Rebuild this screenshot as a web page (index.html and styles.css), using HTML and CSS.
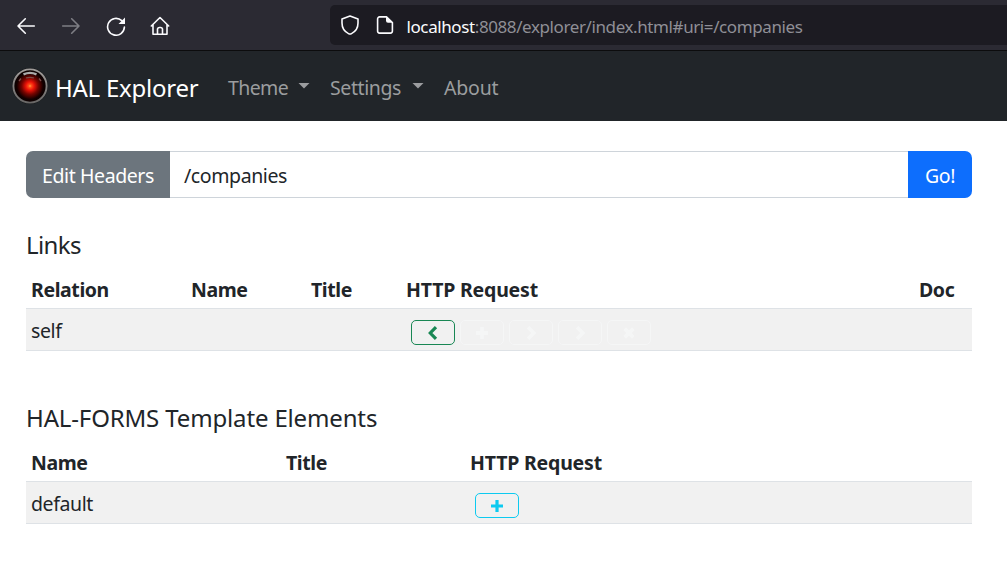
FILE: index.html
```
<!DOCTYPE html>
<html lang="en">
<head>
<meta charset="utf-8">
<title>HAL Explorer</title>
<link rel="stylesheet" href="styles.css">
</head>
<body>
<div class="toolbar">
  <div class="tools">
    <svg class="tool" viewBox="0 0 20 20"><path d="M18.3 10H2M9.300 2.800L2 10l7.300 7.200"/></svg>
    <svg class="tool disabled" viewBox="0 0 20 20"><path d="M1.700 10H18M10.700 2.800L18 10l-7.300 7.200"/></svg>
    <svg class="tool" viewBox="0 0 20 20"><path d="M15.800 4.700A8.400 8.400 0 1 0 18.400 11"/><path class="solid" d="M19 1.500v6.500h-6.500z"/></svg>
    <svg class="tool" viewBox="0 0 20 20"><path d="M1.300 10L10 1.500l8.700 8.500M3 8.800v9.400h14V8.800M7.500 18v-5a2 2 0 0 1 2-1.500h1a2 2 0 0 1 2 1.500v5"/></svg>
  </div>
  <div class="address">
    <svg class="tool" viewBox="0 0 20 20"><path d="M10 1l8 3.100v4c0 4.500-2.300 8.500-6.500 10.500q-1.500.8-3 0C4.300 16.600 2 12.600 2 8.100v-4z"/></svg>
    <svg class="tool page" viewBox="0 0 20 20"><path d="M11.500 1.900H4.600a2 2 0 0 0-2 2v12.200a2 2 0 0 0 2 2h10.800a2 2 0 0 0 2-2V7.500z"/><path class="solid" d="M11 1.500l7 6.300h-5a2 2 0 0 1-2-2z"/></svg>
    <span class="url"><span class="host">localhost</span><span class="path">:8088/explorer/index.html#uri=/companies</span></span>
  </div>
</div>
<nav class="navbar">
  <svg class="logo" viewBox="0 0 38 38">
    <defs>
      <radialGradient id="eye"><stop offset="0" stop-color="#ffa040"/><stop offset=".1" stop-color="#ff4a18"/><stop offset=".26" stop-color="#e81208"/><stop offset=".5" stop-color="#780400"/><stop offset=".8" stop-color="#120000"/><stop offset="1" stop-color="#080000"/></radialGradient>
      <linearGradient id="rim" x2="0" y2="1"><stop offset="0" stop-color="#a09c9a"/><stop offset="1" stop-color="#696766"/></linearGradient>
    </defs>
    <circle cx="19" cy="19" r="18" fill="#15181a"/>
    <circle cx="19" cy="19" r="16.600" fill="url(#eye)" stroke="url(#rim)" stroke-width="1.900"/>
    <path d="M12.500 7.300q6.500-2.800 13 0" fill="none" stroke="#aaa" stroke-width="2.400"/>
    <path d="M15 11q4-1.400 8 0M8 14l2-2.500M30 14l-2-2.500" fill="none" stroke="#7a4a46" stroke-width="1.300"/>
  </svg>
  <span class="brand">HAL Explorer</span>
  <span class="nav-link theme">Theme</span><i class="caret"></i>
  <span class="nav-link settings">Settings</span><i class="caret"></i>
  <span class="nav-link about">About</span>
</nav>
<main class="content">
  <div class="input-group">
    <button class="btn headers">Edit Headers</button>
    <div class="field"><span>/companies</span></div>
    <button class="btn go">Go!</button>
  </div>
  <h5 class="title">Links</h5>
  <div class="table links">
    <div class="row head"><b class="relation">Relation</b><b>Name</b><b>Title</b><b class="request">HTTP Request</b><b>Doc</b></div>
    <div class="row body">
      <span class="self">self</span><span></span><span></span>
      <span class="actions">
        <button class="action get"><svg viewBox="0 0 16 16"><path d="M11 2.200L5.300 8l5.700 5.800"/></svg></button>
        <button class="action off"><svg viewBox="0 0 16 16"><path d="M8 2v12M2 8h12"/></svg></button>
        <button class="action off"><svg viewBox="0 0 16 16"><path d="M5 2.200L10.700 8 5 13.800"/></svg></button>
        <button class="action off"><svg viewBox="0 0 16 16"><path d="M5 2.200L10.700 8 5 13.800"/></svg></button>
        <button class="action off"><svg viewBox="0 0 16 16"><path d="M3.700 3.700l8.600 8.600M12.300 3.700l-8.600 8.600"/></svg></button>
      </span>
      <span></span>
    </div>
  </div>
  <h5 class="title forms-title"><span>HAL-FORMS Template Elements</span></h5>
  <div class="table forms">
    <div class="row head"><b>Name</b><b>Title</b><b class="request">HTTP Request</b></div>
    <div class="row body">
      <span>default</span><span></span>
      <span class="actions"><button class="action post"><svg viewBox="0 0 16 16"><path d="M8 2v12M2 8h12"/></svg></button></span>
    </div>
  </div>
</main>
</body>
</html>
```
FILE: styles.css
```
* { box-sizing: border-box; }
body { margin: 0; background: #fff; color: #212529; font: 19.5px/30px "Noto Sans", "Open Sans", sans-serif; letter-spacing: -.4px; }
button { font: inherit; letter-spacing: inherit; padding: 0; margin: 0; }

.toolbar { display: flex; height: 51px; padding: 5px 0 5px 16px; background: #2b2a33; border-bottom: 1px solid #0c0c0d; }
.tools { display: flex; gap: 24.800px; width: 314px; padding-top: 11px; }
.tool { width: 20px; height: 20px; flex: none; fill: none; stroke: #fbfbfe; stroke-width: 1.600; stroke-linecap: round; stroke-linejoin: round; }
.tool .solid { fill: #fbfbfe; stroke: none; }
.disabled { opacity: .4; }
.address { display: flex; flex: 1; height: 40px; padding: 10px 0 0 10px; background: #1c1b22; border-radius: 5px 0 0 5px; }
.page { margin-left: 15px; }
.url { margin: -3px 0 0 11.500px; font-size: 17px; letter-spacing: -.4px; white-space: nowrap; }
.host { color: #fbfbfe; }
.path { color: #8f8f96; }

.navbar { display: flex; align-items: center; height: 70px; padding: 4px 11px 0; background: #212529; color: #9b9d9f; }
.logo { width: 38px; height: 38px; margin-top: -5px; }
.brand { width: 173px; padding-left: 6px; color: #fff; font-size: 24px; letter-spacing: -.25px; white-space: nowrap; }
.theme { margin-left: 6px; width: 70px; letter-spacing: -.6px; }
.settings { margin-left: 20px; width: 82px; }
.about { margin-left: 20px; letter-spacing: -.2px; }
.caret { width: 12px; height: 6px; margin-top: -5px; background: #9b9d9f; clip-path: polygon(0 0, 100% 0, 50% 100%); }

.content { padding: 30px 35px 0 26px; }
.input-group { display: flex; height: 47px; }
.btn { display: grid; place-items: center; padding-top: 2px; border: 0; color: #fff; }
.headers { width: 144px; background: #6c757d; border-radius: 7px 0 0 7px; }
.go { width: 64px; background: #0d6efd; border-radius: 0 7px 7px 0; }
.field { flex: 1; padding: 9px 14px; border: solid #ced4da; border-width: 1px 0; }
.title { height: 36px; margin: 29px 0 9px; font-size: 24px; line-height: 36px; font-weight: 400; letter-spacing: -.6px; }
.forms-title { margin-top: 49px; letter-spacing: -.15px; }
.row { display: grid; height: 42px; padding-left: 5px; border-bottom: 1px solid #dee2e6; }
.head { height: 37px; padding-top: 3px; }
.request { letter-spacing: -.2px; }
.body { background: #f1f1f1; padding-top: 7px; }
.links .row { grid-template-columns: 160px 120px 95px 513px 1fr; }
.forms .row { grid-template-columns: 255px 184px 1fr; }
.actions { display: flex; gap: 5px; padding: 4px 0 0 5px; }
.action { display: grid; place-items: center; width: 44px; height: 25px; border: 1px solid; border-radius: 5px; background: none; }
.action svg { width: 16px; height: 16px; fill: none; stroke: currentColor; stroke-width: 3.200; }
.get { color: #198754; }
.off { color: #f8f9fa; opacity: .65; }
.off svg { stroke-width: 3.800; }
.post { color: #0dcaf0; }
```
